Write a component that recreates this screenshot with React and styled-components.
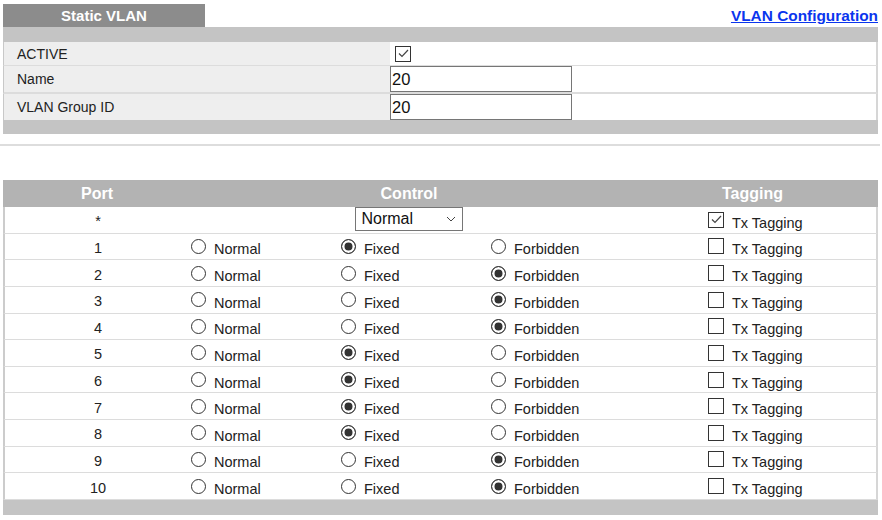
import React from "react";
import styled, { createGlobalStyle } from "styled-components";

const GlobalStyle = createGlobalStyle`
  body {
    margin: 0;
    background: #ffffff;
    font-family: "Liberation Sans", Arial, sans-serif;
    font-size: 14px;
    color: #222222;
  }
`;

const Page = styled.div`
  width: 882px;
  padding-top: 4px;
`;

const Block = styled.div`
  margin: 0 4px 0 3px;
`;

const TitleBar = styled(Block)`
  display: flex;
  justify-content: space-between;
  align-items: flex-end;
`;

const Tab = styled.div`
  width: 202px;
  height: 23px;
  background: #8c8c8c;
  color: #ffffff;
  font-weight: bold;
  font-size: 15px;
  display: flex;
  align-items: center;
  justify-content: center;
`;

const ConfigLink = styled.a`
  color: #0a35ee;
  font-weight: bold;
  font-size: 15.4px;
  line-height: 17px;
  margin-bottom: 3px;
  text-decoration: underline;
  cursor: pointer;
`;

const Bar = styled.div`
  height: ${(p) => p.h || 15}px;
  background: ${(p) => p.color || "#c4c4c4"};
`;

const FieldRow = styled.div`
  display: grid;
  grid-template-columns: 386px 1fr;
  height: ${(p) => p.h}px;
  border-bottom: ${(p) => p.sep || 0}px solid #dcdcdc;
  border-left: 1px solid #c8c8c8;
  border-right: 2px solid #d6d6d6;
  box-sizing: content-box;
`;

const Label = styled.div`
  background: #eeeeee;
  display: flex;
  align-items: center;
  padding-left: 13px;
`;

const Value = styled.div`
  display: flex;
  align-items: center;
  background: #ffffff;
`;

const TextInput = styled.div`
  width: 179px;
  height: 24px;
  border: 1px solid #767676;
  font-size: 16.5px;
  color: #111;
  display: flex;
  align-items: center;
  padding-left: 1px;
`;

const Box = styled.span`
  width: 14px;
  height: 14px;
  border: 1px solid #333333;
  background: #ffffff;
  display: inline-flex;
  align-items: center;
  justify-content: center;
  flex-shrink: 0;
  margin-left: ${(p) => p.ml || 0}px;
`;

const Divider = styled.div`
  height: 2px;
  background: #dddddd;
  margin: 10px 2px 0 0;
`;

const PortTable = styled(Block)`
  margin-top: 34px;
`;

const cols = "188px 436px 1fr";

const HeadRow = styled.div`
  display: grid;
  grid-template-columns: ${cols};
  height: 27px;
  background: #b3b3b3;
  color: #ffffff;
  font-weight: bold;
  font-size: 16px;
`;

const HeadCell = styled.div`
  display: flex;
  align-items: center;
  justify-content: center;
`;

const PortRow = styled.div`
  display: grid;
  grid-template-columns: ${cols};
  height: 26.64px;
  box-sizing: border-box;
  border-bottom: 1px solid #dcdcdc;
  border-left: 2px solid #cccccc;
  border-right: 2px solid #d6d6d6;
  background: #ffffff;
  font-size: 14.5px;
`;

const PortCell = styled.div`
  display: flex;
  align-items: center;
  justify-content: center;
  padding-top: 3px;
  margin-left: -2px;
`;

const ControlCell = styled.div`
  display: grid;
  grid-template-columns: 150px 150px 1fr;
  align-items: center;
  margin-left: -2px;
`;

const SelectCell = styled.div`
  display: flex;
  justify-content: center;
  align-items: flex-start;
`;

const Select = styled.div`
  width: 94px;
  height: 22px;
  border: 1px solid #767676;
  font-size: 16px;
  color: #111;
  display: flex;
  align-items: center;
  justify-content: space-between;
  padding: 0 6px;
  box-sizing: content-box;
  margin-left: -5px;
`;

const Choice = styled.label`
  display: flex;
  align-items: center;
  gap: 8px;
`;

const Radio = styled.span`
  width: 13px;
  height: 13px;
  border-radius: 50%;
  border: 1px solid #333333;
  background: ${(p) => (p.on ? "#333333" : "#ffffff")};
  box-shadow: ${(p) => (p.on ? "inset 0 0 0 2.5px #ffffff" : "none")};
  flex-shrink: 0;
`;

const ChoiceText = styled.span`
  padding-top: ${(p) => p.pt || 6}px;
`;

const TagCell = styled.div`
  display: flex;
  align-items: center;
  gap: 8px;
  padding-left: 79px;
`;

const Check = () => (
  <svg width="13" height="13" viewBox="0 0 13 13">
    <polyline
      points="2,6.5 5,9.5 11,3"
      fill="none"
      stroke="#444"
      strokeWidth="1.2"
    />
  </svg>
);

const Chevron = () => (
  <svg width="10" height="6" viewBox="0 0 10 6">
    <polyline points="1,1 5,5 9,1" fill="none" stroke="#444" strokeWidth="1" />
  </svg>
);

const ports = [
  "Fixed",
  "Forbidden",
  "Forbidden",
  "Forbidden",
  "Fixed",
  "Fixed",
  "Fixed",
  "Fixed",
  "Forbidden",
  "Forbidden",
];

const options = ["Normal", "Fixed", "Forbidden"];

const Tagging = ({ checked }) => (
  <TagCell>
    <Box>{checked && <Check />}</Box>
    <ChoiceText pt={6}>Tx Tagging</ChoiceText>
  </TagCell>
);

export default function App() {
  return (
    <Page>
      <GlobalStyle />
      <TitleBar>
        <Tab>Static VLAN</Tab>
        <ConfigLink>VLAN Configuration</ConfigLink>
      </TitleBar>
      <Block>
        <Bar h={15} />
        <FieldRow h={23} sep={1}>
          <Label>ACTIVE</Label>
          <Value>
            <Box ml={5}>
              <Check />
            </Box>
          </Value>
        </FieldRow>
        <FieldRow h={26} sep={2}>
          <Label>Name</Label>
          <Value>
            <TextInput>20</TextInput>
          </Value>
        </FieldRow>
        <FieldRow h={26}>
          <Label>VLAN Group ID</Label>
          <Value>
            <TextInput>20</TextInput>
          </Value>
        </FieldRow>
        <Bar h={14} />
      </Block>
      <Divider />
      <PortTable>
        <HeadRow>
          <HeadCell>Port</HeadCell>
          <HeadCell>Control</HeadCell>
          <HeadCell>Tagging</HeadCell>
        </HeadRow>
        <PortRow>
          <PortCell>*</PortCell>
          <SelectCell>
            <Select>
              <span>Normal</span>
              <Chevron />
            </Select>
          </SelectCell>
          <Tagging checked />
        </PortRow>
        {ports.map((mode, i) => (
          <PortRow key={i}>
            <PortCell>{i + 1}</PortCell>
            <ControlCell>
              {options.map((o) => (
                <Choice key={o}>
                  <Radio on={o === mode} />
                  <ChoiceText>{o}</ChoiceText>
                </Choice>
              ))}
            </ControlCell>
            <Tagging />
          </PortRow>
        ))}
        <Bar h={15} />
      </PortTable>
    </Page>
  );
}
